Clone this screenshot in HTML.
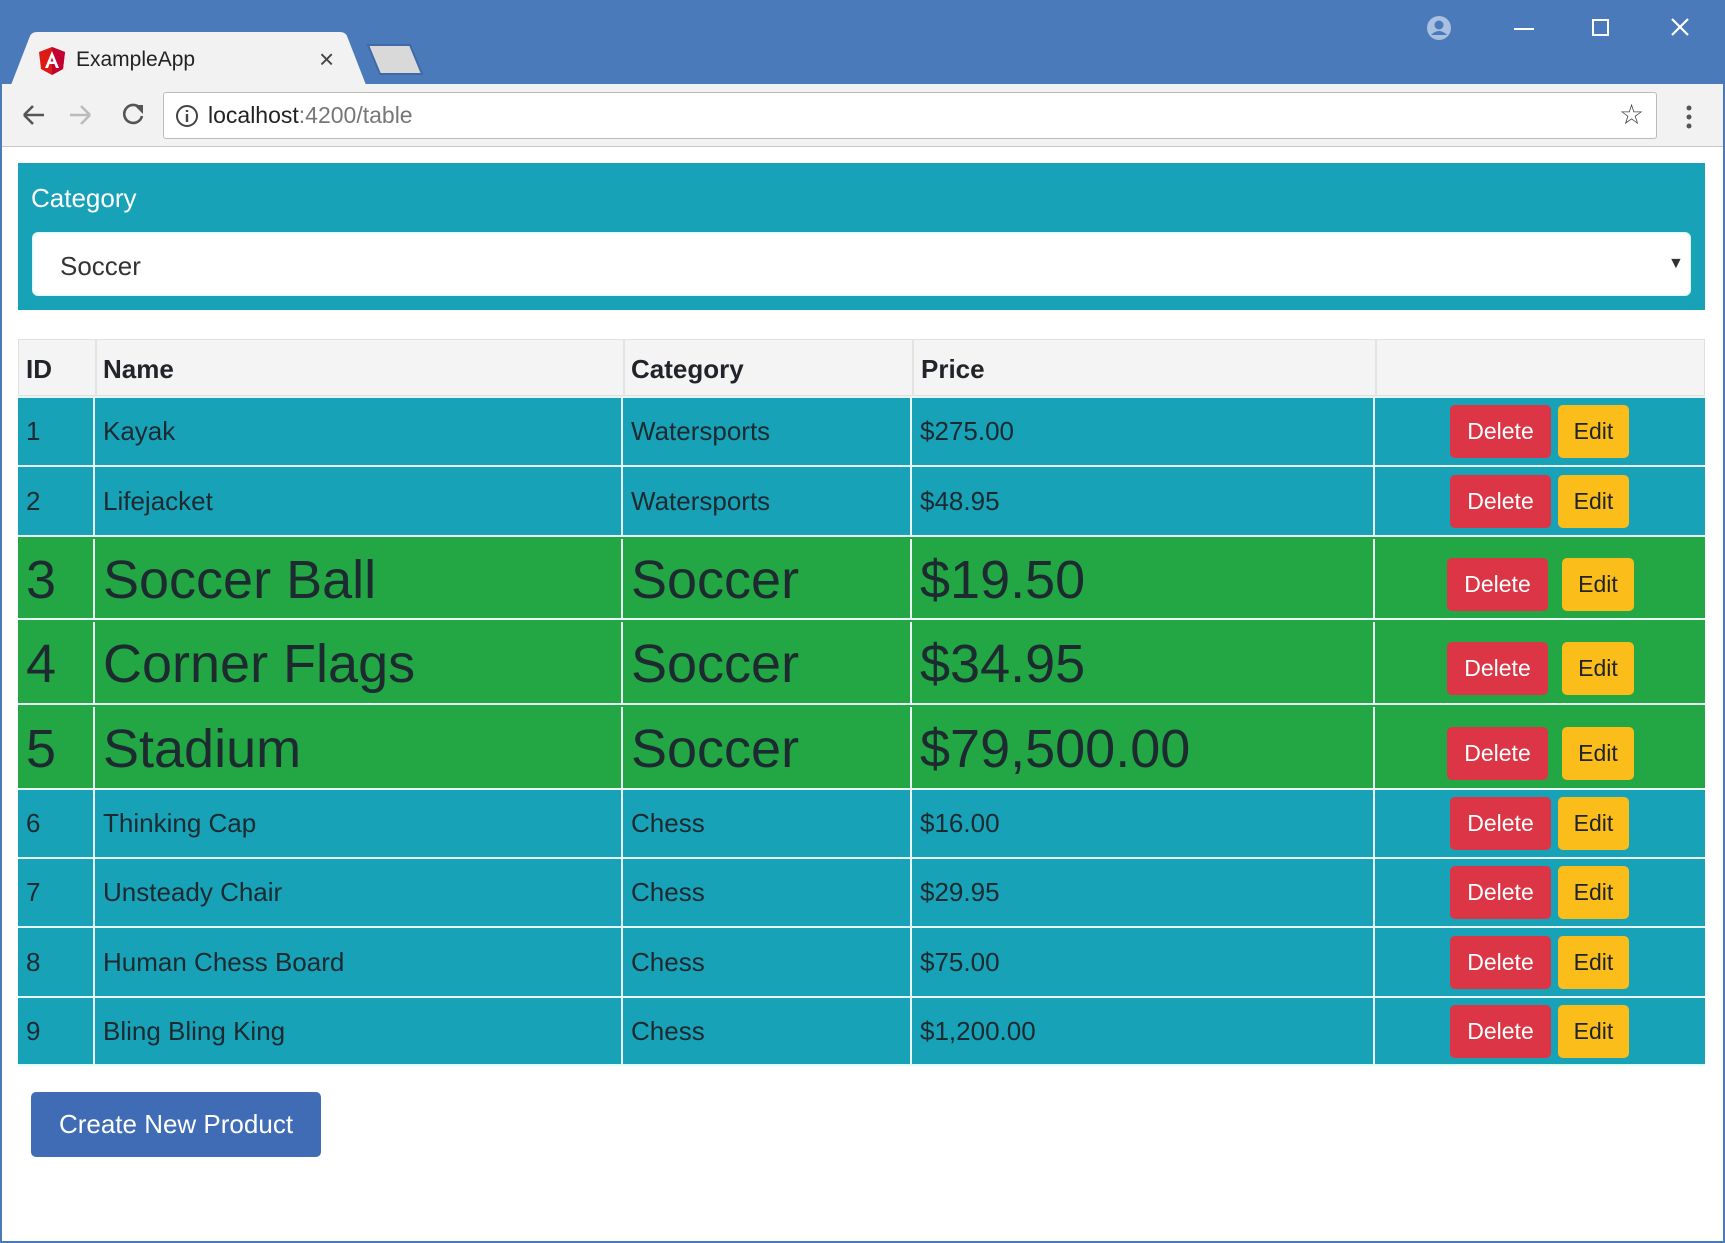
<!DOCTYPE html>
<html><head><style>
*{box-sizing:border-box;margin:0;padding:0}
body{width:1725px;height:1243px;background:#fff;font-family:"Liberation Sans",sans-serif;position:relative;overflow:hidden;color:#212529}
.a{position:absolute}
.td{position:absolute;display:flex;align-items:center;padding-left:8px;border-right:2px solid #e8f4f6}
.btn{position:absolute;border-radius:5px;display:flex;align-items:center;justify-content:center;font-size:23px}
.del{background:#dc3545;color:#fff}
.ed{background:#fbbd1a;color:#212529}
</style></head><body>
<div class="a" style="left:0;top:0;width:1725px;height:1243px;border:2px solid #4a7aba;border-top:0"></div>
<div class="a" style="left:0;top:0;width:1725px;height:84px;background:#4a7aba"></div>
<svg class="a" style="left:0;top:30px" width="440" height="56"><path d="M11 55 L30 6 Q32 2 37 2 L340 2 Q345 2 347 6 L366 55 Z" fill="#f2f2f2"/><path d="M368 15 L410 15 L422 44 L380 44 Z" fill="#d9d9d9" stroke="#3f6aa5" stroke-width="2"/></svg>
<svg class="a" style="left:38px;top:46px" width="28" height="30" viewBox="0 0 28 30"><path d="M14 1 L27 6 L25 23 L14 29 L3 23 L1 6Z" fill="#dd1b16"/><path d="M14 1 L27 6 L25 23 L14 29Z" fill="#c3002f"/><path d="M14 5 L7 22 H10 L11.5 18 H16.5 L18 22 H21 Z M12.5 15.5 L14 11.5 L15.5 15.5Z" fill="#fff"/></svg>
<div class="a" style="left:76px;top:48px;font-size:21px;color:#222">ExampleApp</div>
<div class="a" style="left:319px;top:44px;font-size:26px;color:#444">×</div>
<svg class="a" style="left:1426px;top:15px" width="26" height="26"><circle cx="13" cy="13" r="12" fill="#a9c0e0"/><circle cx="13" cy="10" r="4.5" fill="#4a7aba"/><path d="M5 20 Q13 12 21 20" fill="#4a7aba"/></svg>
<div class="a" style="left:1514px;top:28px;width:20px;height:2px;background:#fff"></div>
<div class="a" style="left:1592px;top:19px;width:17px;height:17px;border:2px solid #fff"></div>
<svg class="a" style="left:1670px;top:17px" width="20" height="20"><path d="M2 2 L18 18 M18 2 L2 18" stroke="#fff" stroke-width="2.2"/></svg>
<div class="a" style="left:2px;top:84px;width:1721px;height:63px;background:#f2f2f2;border-bottom:1px solid #c8c8c8"></div>
<svg class="a" style="left:20px;top:102px" width="130" height="26"><path d="M4 13 H24 M4 13 L13 4 M4 13 L13 22" stroke="#555" stroke-width="2.6" fill="none"/><path d="M50 13 H70 M70 13 L61 4 M70 13 L61 22" stroke="#bbb" stroke-width="2.6" fill="none"/><path d="M120 6 A9 9 0 1 0 122 14" stroke="#555" stroke-width="2.6" fill="none"/><path d="M114 3 L123 3 L123 12Z" fill="#555"/></svg>
<div class="a" style="left:163px;top:92px;width:1494px;height:47px;background:#fff;border:1px solid #bbb;border-radius:3px"></div>
<svg class="a" style="left:175px;top:104px" width="24" height="24"><circle cx="12" cy="12" r="10" stroke="#444" stroke-width="2" fill="none"/><path d="M12 10 V18 M12 6 V8" stroke="#444" stroke-width="2.4"/></svg>
<div class="a" style="left:208px;top:102px;font-size:23px;color:#222">localhost<span style="color:#777">:4200/table</span></div>
<div class="a" style="left:1619px;top:98px;font-size:28px;color:#444">☆</div>
<svg class="a" style="left:1684px;top:104px" width="10" height="28"><circle cx="5" cy="4" r="2.5" fill="#555"/><circle cx="5" cy="13" r="2.5" fill="#555"/><circle cx="5" cy="22" r="2.5" fill="#555"/></svg>
<div class="a" style="left:18px;top:163px;width:1687px;height:147px;background:#17a2b8"></div>
<div class="a" style="left:31px;top:183px;font-size:26px;color:#fff">Category</div>
<div class="a" style="left:32px;top:232px;width:1659px;height:64px;background:#fff;border-radius:6px;border:1px solid #cfe"></div>
<div class="a" style="left:60px;top:251px;font-size:26px;color:#333">Soccer</div>
<div class="a" style="left:1668px;top:255px;font-size:16px;color:#333">▼</div>
<div class="a" style="left:18px;top:339px;width:1687px;height:57px;background:#f4f4f4;border:1px solid #e0e0e0"></div>
<div class="a" style="left:95px;top:339px;width:2px;height:57px;background:#e3e3e3"></div>
<div class="a" style="left:623px;top:339px;width:2px;height:57px;background:#e3e3e3"></div>
<div class="a" style="left:912px;top:339px;width:2px;height:57px;background:#e3e3e3"></div>
<div class="a" style="left:1375px;top:339px;width:2px;height:57px;background:#e3e3e3"></div>
<div class="a" style="left:26px;top:354px;font-size:26px;font-weight:bold">ID</div>
<div class="a" style="left:103px;top:354px;font-size:26px;font-weight:bold">Name</div>
<div class="a" style="left:631px;top:354px;font-size:26px;font-weight:bold">Category</div>
<div class="a" style="left:921px;top:354px;font-size:26px;font-weight:bold">Price</div>
<div id="rows"></div>
<script>
var d=[[1,"Kayak","Watersports","$275.00",396,465,0],[2,"Lifejacket","Watersports","$48.95",465,535,0],[3,"Soccer Ball","Soccer","$19.50",535,618,1],[4,"Corner Flags","Soccer","$34.95",618,703,1],[5,"Stadium","Soccer","$79,500.00",703,788,1],[6,"Thinking Cap","Chess","$16.00",788,857,0],[7,"Unsteady Chair","Chess","$29.95",857,926,0],[8,"Human Chess Board","Chess","$75.00",926,996,0],[9,"Bling Bling King","Chess","$1,200.00",996,1064,0]];
var h="",cols=[18,95,623,912,1375,1705];
d.forEach(function(r){var t=r[4],hh=r[5]-r[4],g=r[6];
h+='<div class="a" style="left:18px;top:'+t+'px;width:1687px;height:'+hh+'px;background:'+(g?'#22a744':'#17a2b8')+';border-top:2px solid #e8f4f6"></div>';
for(var i=0;i<4;i++){h+='<div class="td" style="left:'+cols[i]+'px;top:'+(t+2+(g?2:0))+'px;width:'+(cols[i+1]-cols[i])+'px;height:'+(hh-2)+'px;font-size:'+(g?'54px':'26px')+';color:#1d2a30">'+[r[0],r[1],r[2],r[3]][i]+'</div>';}
var bt=t+(hh-53)/2+1+(g?7:0);
var dx=g?1447:1450,ex=g?1562:1558,ew=g?72:71;
h+='<div class="btn del" style="left:'+dx+'px;top:'+bt+'px;width:101px;height:53px">Delete</div>';
h+='<div class="btn ed" style="left:'+ex+'px;top:'+bt+'px;width:'+ew+'px;height:53px">Edit</div>';});
h+='<div class="a" style="left:18px;top:1064px;width:1687px;height:2px;background:#dfe"></div>';
document.getElementById("rows").innerHTML=h;
</script>
<div class="btn" style="left:31px;top:1092px;width:290px;height:65px;background:#3f6cb4;color:#fff;font-size:26px">Create New Product</div>
</body></html>
